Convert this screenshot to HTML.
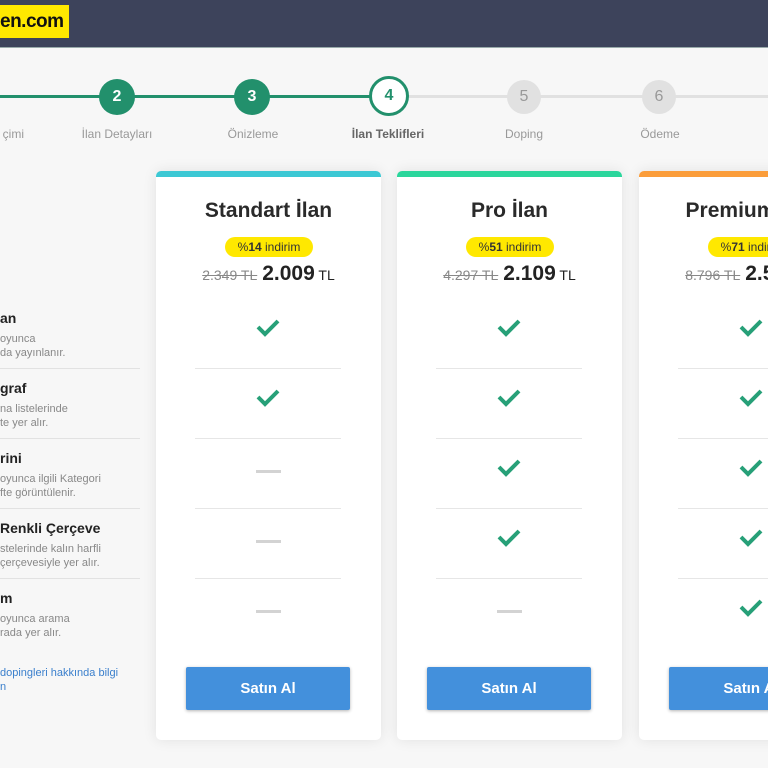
<!DOCTYPE html>
<html><head><meta charset="utf-8"><style>
*{margin:0;padding:0;box-sizing:border-box}
html,body{overflow:hidden}
body{width:768px;height:768px;background:#f7f7f7;font-family:"Liberation Sans",Arial,sans-serif;position:relative}
.a{position:absolute}
.hdr{left:0;top:0;width:768px;height:48px;background:#3d435b;border-bottom:1px solid #9aa}
.logo{left:0;top:5px;width:69px;height:33px;background:#ffe800;font-weight:bold;font-size:19px;line-height:33px;color:#111;letter-spacing:-0.5px;padding-left:0}
.ln{height:3px;top:95px}
.c{width:36px;height:36px;border-radius:50%;top:79px;text-align:center;line-height:36px;font-weight:bold;font-size:16px}
.g{background:#22906c;color:#fff}
.gr{background:#e1e1e1;color:#999;font-weight:normal;width:34px;height:34px;top:80px;line-height:34px}
.lb{top:127px;font-size:12px;color:#999;width:140px;text-align:center}
.card{top:171px;width:225px;height:569px;background:#fff;border-radius:5px;box-shadow:0 0 14px rgba(0,0,0,.09);overflow:hidden}
.bar{left:0;top:0;width:225px;height:6px}
.t{left:0;width:225px;top:28px;text-align:center;font-weight:bold;font-size:21px;color:#2a2a2a}
.bd{top:66px;height:20px;border-radius:10px;background:#ffe800;font-size:12px;line-height:20px;text-align:center;color:#333;width:88px;left:69px}
.pr{top:91px;width:225px;text-align:center;color:#222;font-size:14px}
.pr s{color:#888;font-size:14px;margin-right:5px}
.pr b{font-size:21px}
.dv{left:39px;width:146px;height:1px;background:#e6e6e6}
.ck{left:100px;width:24px;height:20px}
.ds{left:100px;width:25px;height:3px;background:#d3d3d3}
.btn{left:30px;top:496px;width:164px;height:43px;background:#4390dc;border-radius:2px;color:#fff;font-weight:bold;font-size:15px;text-align:center;line-height:43px;box-shadow:0 1px 3px rgba(0,0,0,.3)}
.lt{left:0;font-weight:bold;font-size:14px;color:#222}
.ld{left:0;font-size:11px;color:#888;line-height:14px}
.lv{left:0;width:140px;height:1px;background:#e2e2e2}
</style></head><body>
<div class="a hdr"></div>
<div class="a logo">en.com</div>

<div class="a ln" style="left:0;width:388px;background:#22906c"></div>
<div class="a ln" style="left:388px;width:380px;background:#e1e1e1"></div>
<div class="a c g" style="left:99px">2</div>
<div class="a c g" style="left:234px">3</div>
<div class="a c" style="left:369px;top:76px;width:40px;height:40px;line-height:34px;background:#fff;border:3px solid #22906c;color:#22906c">4</div>
<div class="a c gr" style="left:507px">5</div>
<div class="a c gr" style="left:642px">6</div>
<div class="a lb" style="left:-60px;text-align:right;width:84px">çimi</div>
<div class="a lb" style="left:47px">İlan Detayları</div>
<div class="a lb" style="left:183px">Önizleme</div>
<div class="a lb" style="left:318px;color:#666;font-weight:bold">İlan Teklifleri</div>
<div class="a lb" style="left:454px">Doping</div>
<div class="a lb" style="left:590px">Ödeme</div>

<div class="a lt" style="top:310px">an</div>
<div class="a ld" style="top:332px">oyunca<br>da yayınlanır.</div>
<div class="a lv" style="top:368px"></div>
<div class="a lt" style="top:380px">graf</div>
<div class="a ld" style="top:402px">na listelerinde<br>te yer alır.</div>
<div class="a lv" style="top:438px"></div>
<div class="a lt" style="top:450px">rini</div>
<div class="a ld" style="top:472px">oyunca ilgili Kategori<br>fte görüntülenir.</div>
<div class="a lv" style="top:508px"></div>
<div class="a lt" style="top:520px">Renkli Çerçeve</div>
<div class="a ld" style="top:542px">stelerinde kalın harfli<br>çerçevesiyle yer alır.</div>
<div class="a lv" style="top:578px"></div>
<div class="a lt" style="top:590px">m</div>
<div class="a ld" style="top:612px">oyunca arama<br>rada yer alır.</div>
<div class="a ld" style="top:666px;color:#3a7fcc">dopingleri hakkında bilgi<br>n</div>

<div class="a card" style="left:156px">
<div class="a bar" style="background:#3cc8d4"></div>
<div class="a t">Standart İlan</div>
<div class="a bd">%<b>14</b> indirim</div>
<div class="a pr"><s>2.349 TL</s><b>2.009</b> TL</div>
<svg class="a ck" style="top:147px" viewBox="0 0 24 20"><path d="M2 9l7 7L22 3" fill="none" stroke="#27a078" stroke-width="4"/></svg>
<div class="a dv" style="top:197px"></div>
<svg class="a ck" style="top:217px" viewBox="0 0 24 20"><path d="M2 9l7 7L22 3" fill="none" stroke="#27a078" stroke-width="4"/></svg>
<div class="a dv" style="top:267px"></div>
<div class="a ds" style="top:299px"></div>
<div class="a dv" style="top:337px"></div>
<div class="a ds" style="top:369px"></div>
<div class="a dv" style="top:407px"></div>
<div class="a ds" style="top:439px"></div>
<div class="a btn">Satın Al</div>
</div>

<div class="a card" style="left:397px">
<div class="a bar" style="background:#2bd69c"></div>
<div class="a t">Pro İlan</div>
<div class="a bd">%<b>51</b> indirim</div>
<div class="a pr"><s>4.297 TL</s><b>2.109</b> TL</div>
<svg class="a ck" style="top:147px" viewBox="0 0 24 20"><path d="M2 9l7 7L22 3" fill="none" stroke="#27a078" stroke-width="4"/></svg>
<div class="a dv" style="top:197px"></div>
<svg class="a ck" style="top:217px" viewBox="0 0 24 20"><path d="M2 9l7 7L22 3" fill="none" stroke="#27a078" stroke-width="4"/></svg>
<div class="a dv" style="top:267px"></div>
<svg class="a ck" style="top:287px" viewBox="0 0 24 20"><path d="M2 9l7 7L22 3" fill="none" stroke="#27a078" stroke-width="4"/></svg>
<div class="a dv" style="top:337px"></div>
<svg class="a ck" style="top:357px" viewBox="0 0 24 20"><path d="M2 9l7 7L22 3" fill="none" stroke="#27a078" stroke-width="4"/></svg>
<div class="a dv" style="top:407px"></div>
<div class="a ds" style="top:439px"></div>
<div class="a btn">Satın Al</div>
</div>

<div class="a card" style="left:639px">
<div class="a bar" style="background:#fb9d3a"></div>
<div class="a t">Premium İlan</div>
<div class="a bd">%<b>71</b> indirim</div>
<div class="a pr"><s>8.796 TL</s><b>2.549</b> TL</div>
<svg class="a ck" style="top:147px" viewBox="0 0 24 20"><path d="M2 9l7 7L22 3" fill="none" stroke="#27a078" stroke-width="4"/></svg>
<div class="a dv" style="top:197px"></div>
<svg class="a ck" style="top:217px" viewBox="0 0 24 20"><path d="M2 9l7 7L22 3" fill="none" stroke="#27a078" stroke-width="4"/></svg>
<div class="a dv" style="top:267px"></div>
<svg class="a ck" style="top:287px" viewBox="0 0 24 20"><path d="M2 9l7 7L22 3" fill="none" stroke="#27a078" stroke-width="4"/></svg>
<div class="a dv" style="top:337px"></div>
<svg class="a ck" style="top:357px" viewBox="0 0 24 20"><path d="M2 9l7 7L22 3" fill="none" stroke="#27a078" stroke-width="4"/></svg>
<div class="a dv" style="top:407px"></div>
<svg class="a ck" style="top:427px" viewBox="0 0 24 20"><path d="M2 9l7 7L22 3" fill="none" stroke="#27a078" stroke-width="4"/></svg>
<div class="a btn">Satın Al</div>
</div>
</body></html>
